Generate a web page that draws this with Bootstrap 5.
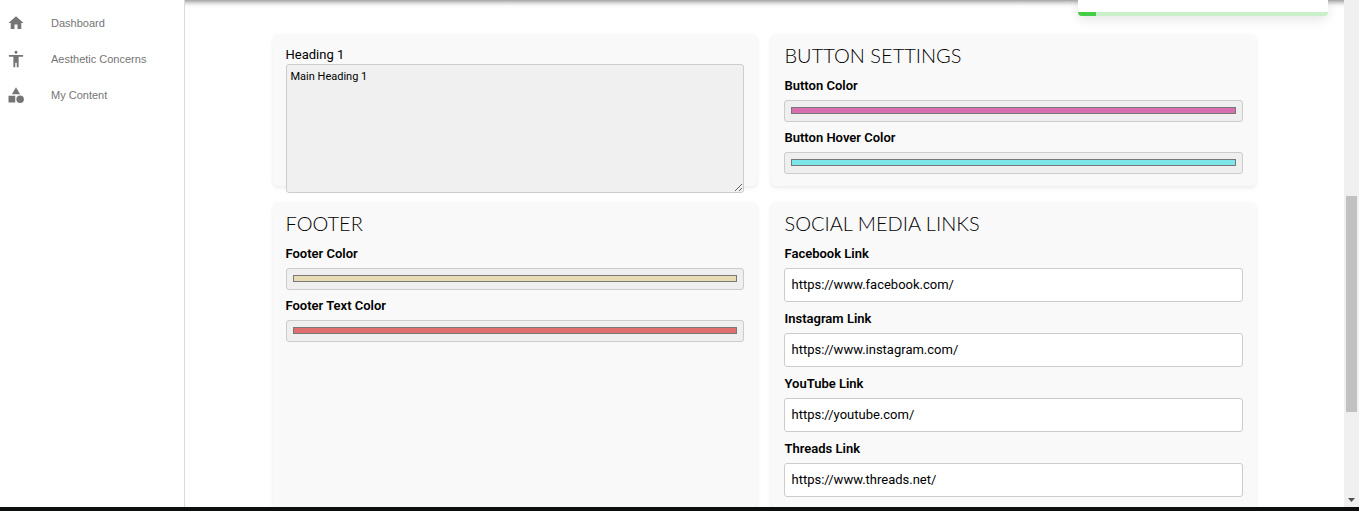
<!DOCTYPE html>
<html lang="en">
<head>
<meta charset="utf-8">
<meta name="viewport" content="width=device-width, initial-scale=1">
<title>My Content</title>
<link href="https://cdn.jsdelivr.net/npm/bootstrap@5.3.0/dist/css/bootstrap.min.css" rel="stylesheet">
<style>
  body { font-family: Roboto, "Liberation Sans", sans-serif; font-size: 13px; line-height: 20px; color: #000; background: #fff; }
  .side-menu { width: 185px; border-right: 1px solid #dadada; padding-top: 5px; }
  .side-menu a { height: 36px; padding-left: 7px; gap: 26px; color: #757575; font: 11px/20px "Liberation Sans", sans-serif; }
  .side-menu svg { width: 18px; height: 18px; fill: #757575; }
  .bar-shade { height: 8px; background: linear-gradient(#a4a4a4, #d6d6d6 35%, #f7f7f7 70%, #fff); }
  .settings-grid { width: 84.9%; display: grid; grid-template-columns: 1fr 1fr; column-gap: 14px; row-gap: 16px; padding-top: 26px; }
  .panel { background: #f9f9f9; border-radius: 5px; box-shadow: 0 2px 4px rgba(0, 0, 0, .08); padding: 11px 13px 12px; }
  .panel-title { font: 300 20px/20px Lato, sans-serif; margin-bottom: 11px; }
  .bold-label { font-weight: 600; margin-bottom: 4px; display: block; }
  .color-box { display: block; width: 100%; height: 22px; border: 1px solid #ccc; border-radius: 3px; background: #efefef; padding: 6px 6px 7px; }
  .color-box::-webkit-color-swatch-wrapper { padding: 0; }
  .color-box::-webkit-color-swatch { border: 1px solid #777; border-radius: 0; }
  .link-box { display: block; width: 100%; height: 34px; border: 1px solid #ccc; border-radius: 3px; padding: 0 6px 2px; color: #000; }
  .color-stack { display: grid; gap: 6px; }
  .link-stack { display: grid; gap: 7px; }
  .heading-label { display: block; }
  .heading-box { display: block; width: 100%; height: 129px; margin-bottom: -24px; margin-top: -1px; border: 1px solid #ccc; border-radius: 3px; background: #f0f0f0; padding: 4px; font-size: 11px; line-height: 16px; color: #000; resize: both; position: relative; }
  .notice { top: 0; right: 16px; width: 250px; height: 16px; padding-top: 12px; background: #fff; border-radius: 0 0 6px 6px; box-shadow: 0 4px 12px rgba(0, 0, 0, .1); }
  .notice .progress { height: 4px; background: #caf0ca; border-radius: 0 0 6px 6px; }
  .notice .progress-bar { background: #47cc47; }
  .scroll-track { width: 15px; background: #f0f0f0; padding: 0 2px 4px; }
  .scroll-thumb { background: #c1c1c1; }
  .bottom-strip { height: 4px; background: #0c0d0d; }
</style>
</head>
<body class="vh-100 d-flex flex-column overflow-hidden">
<div class="d-flex flex-grow-1 overflow-hidden">
  <nav class="side-menu flex-shrink-0 d-flex flex-column" aria-label="Main menu">
    <a href="#" class="d-flex align-items-center text-decoration-none"><svg viewBox="0 0 24 24" aria-hidden="true"><path d="M10 20v-6h4v6h5v-8h3L12 3 2 12h3v8z"/></svg>Dashboard</a>
    <a href="#" class="d-flex align-items-center text-decoration-none"><svg viewBox="0 0 24 24" aria-hidden="true"><path d="M12 1c1.100 0 2 .9 2 2s-.9 2-2 2-2-.9-2-2 .9-2 2-2m9.500 8h-6v14h-2.500v-6h-2v6H8.500V9h-6V6.500h19z"/></svg>Aesthetic Concerns</a>
    <a href="#" class="d-flex align-items-center text-decoration-none"><svg viewBox="0 0 24 24" aria-hidden="true"><path d="m12 1.500-5.500 9.500h11z"/><circle cx="17.500" cy="17.500" r="5"/><path d="M2 13h9v9H2z"/></svg>My Content</a>
  </nav>
  <div class="position-relative flex-grow-1 overflow-hidden">
    <div class="bar-shade"></div>
    <div class="notice position-absolute" role="status">
      <div class="progress" role="progressbar" aria-label="Time left" aria-valuenow="7" aria-valuemin="0" aria-valuemax="100"><div class="progress-bar" style="width:7.2%"></div></div>
    </div>
    <main class="settings-grid mx-auto">
      <section class="panel">
        <label for="h1text" class="heading-label">Heading 1</label>
        <textarea id="h1text" class="heading-box">Main Heading 1</textarea>
      </section>
      <section class="panel">
        <h2 class="panel-title">BUTTON SETTINGS</h2>
        <div class="color-stack">
          <div><label class="bold-label" for="btnColor">Button Color</label><input class="color-box" type="color" id="btnColor" value="#d86db0"></div>
          <div><label class="bold-label" for="btnHover">Button Hover Color</label><input class="color-box" type="color" id="btnHover" value="#7de6e8"></div>
        </div>
      </section>
      <section class="panel">
        <h2 class="panel-title">FOOTER</h2>
        <div class="color-stack">
          <div><label class="bold-label" for="footColor">Footer Color</label><input class="color-box" type="color" id="footColor" value="#e8dcb5"></div>
          <div><label class="bold-label" for="footText">Footer Text Color</label><input class="color-box" type="color" id="footText" value="#e07070"></div>
        </div>
      </section>
      <section class="panel">
        <h2 class="panel-title">SOCIAL MEDIA LINKS</h2>
        <div class="link-stack">
          <div><label class="bold-label" for="fb">Facebook Link</label><input class="link-box" type="text" id="fb" value="https://www.facebook.com/"></div>
          <div><label class="bold-label" for="ig">Instagram Link</label><input class="link-box" type="text" id="ig" value="https://www.instagram.com/"></div>
          <div><label class="bold-label" for="yt">YouTube Link</label><input class="link-box" type="text" id="yt" value="https://youtube.com/"></div>
          <div><label class="bold-label" for="th">Threads Link</label><input class="link-box" type="text" id="th" value="https://www.threads.net/"></div>
        </div>
      </section>
    </main>
  </div>
  <div class="scroll-track flex-shrink-0 d-flex flex-column align-items-center" aria-hidden="true">
    <div class="w-100" style="flex:196 0 0"></div>
    <div class="scroll-thumb w-100" style="flex:216 0 0"></div>
    <div style="flex:86 0 0"></div>
    <svg width="7" height="5" viewBox="0 0 7 5"><path d="M0 0h7L3.500 4z" fill="#505050"/></svg>
  </div>
</div>
<div class="bottom-strip flex-shrink-0"></div>
<script src="https://cdn.jsdelivr.net/npm/bootstrap@5.3.0/dist/js/bootstrap.bundle.min.js"></script>
</body>
</html>
